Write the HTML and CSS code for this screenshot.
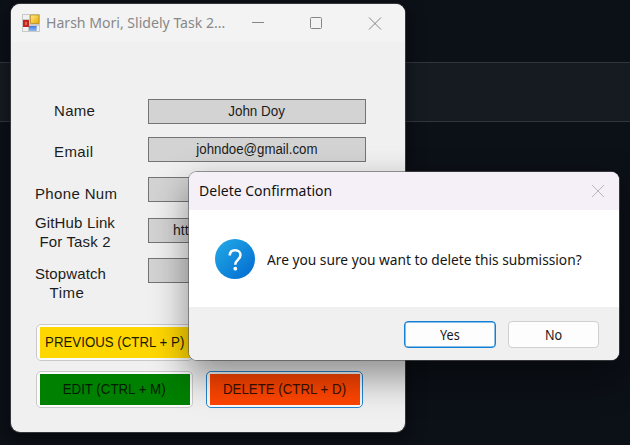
FILE: index.html
```html
<!DOCTYPE html>
<html lang="en">
<head>
<meta charset="utf-8">
<title>Slidely Task 2</title>
<link rel="stylesheet" href="styles.css">
</head>
<body>
<main class="desktop">
  <div class="band"></div>
  <section class="window form-window">
    <header class="form-title">
      <svg class="app-icon" width="18" height="18" viewBox="0 0 18 18">
        <defs>
          <linearGradient id="gold" x1="0" y1="0" x2="1" y2="1"><stop offset="0" stop-color="#ffec8b"/><stop offset="1" stop-color="#e9a800"/></linearGradient>
          <linearGradient id="sky" x1="0" y1="0" x2="0" y2="1"><stop offset="0" stop-color="#3f7be0"/><stop offset="1" stop-color="#8dbcf8"/></linearGradient>
        </defs>
        <path d="M0 0h18v18H0z" fill="#c9c9c9"/>
        <path d="M1 1h6v4H1zM1 13h5v4H1zM15 12h2v5h-2z" fill="#f1f1f1"/>
        <path d="M8.500 1h8.500v8.500H8.500z" fill="url(#gold)" stroke="#b98a18" stroke-width=".7"/>
        <path d="M1 6h6v7H1z" fill="#c3261b"/>
        <path d="M3.500 8h1v3h-1z" fill="#f3a29a"/>
        <path d="M7 12h7.500v5H7z" fill="url(#sky)"/>
      </svg>
      <h1><span>Harsh Mori, Slidely Task 2...</span></h1>
      <svg class="controls" width="132" height="14" viewBox="0 0 132 14" fill="none" stroke="#858585">
        <path d="M0 6.500h12"/><rect x="58.500" y="1.500" width="11" height="11" rx="1"/><path d="M117 1.500l12 12M129 1.500l-12 12"/>
      </svg>
    </header>
    <div class="form-body">
      <div class="row r1"><label><span class="name">Name</span></label><div class="field"><span class="john">John Doy</span></div></div>
      <div class="row r2"><label><span class="email">Email</span></label><div class="field"><span class="mail">johndoe@gmail.com</span></div></div>
      <div class="row r3"><label><span class="phone">Phone Num</span></label><div class="field"></div></div>
      <div class="row r4"><label><span class="github">GitHub Link<br>For Task 2</span></label><div class="field link"><span>https:</span></div></div>
      <div class="row r5"><label><span class="stopwatch">Stopwatch<br><span class="time">Time</span></span></label><div class="field"></div></div>
      <div class="actions">
        <button class="action previous"><span><b>PREVIOUS (CTRL + P)</b></span></button>
        <button class="action next"></button>
        <button class="action edit"><span><b>EDIT (CTRL + M)</b></span></button>
        <button class="action delete"><span><b>DELETE (CTRL + D)</b></span></button>
      </div>
    </div>
  </section>
  <section class="window dialog">
    <header class="dialog-title">
      <h2>Delete Confirmation</h2>
      <svg width="14" height="14" viewBox="0 0 14 14" fill="none" stroke="#b9b5bc"><path d="M1 1l12 12M13 1L1 13"/></svg>
    </header>
    <div class="message">
      <svg width="40" height="40" viewBox="0 0 40 40">
        <defs><linearGradient id="blue" x1=".1" y1=".1" x2=".9" y2=".9"><stop offset="0" stop-color="#20a5e5"/><stop offset="1" stop-color="#0570d2"/></linearGradient></defs>
        <circle cx="20" cy="20" r="20" fill="url(#blue)"/>
        <path d="M14.800 16.500c0-3.500 2.200-5.200 5.400-5.200s5.300 1.900 5.300 4.700c0 4.600-5.200 4.700-5.200 9.800" fill="none" stroke="#fff" stroke-width="2.500"/>
        <circle cx="20.300" cy="29.700" r="1.900" fill="#fff"/>
      </svg>
      <p>Are you sure you want to delete this submission?</p>
    </div>
    <footer>
      <button class="choice yes"><b>Yes</b></button>
      <button class="choice"><b>No</b></button>
    </footer>
  </section>
</main>
</body>
</html>
```
FILE: styles.css
```css
* { box-sizing: border-box; }
body { margin: 0; }
h1, h2, p { margin: 0; font-weight: 400; white-space: nowrap; }
button { margin: 0; padding: 0; font: inherit; }
.desktop { position: relative; width: 630px; height: 445px; overflow: hidden; padding-top: 62px; background: #0c1017; }
.band { height: 60px; background: #161b22; border: solid #30363d; border-width: 1px 0; }
.window { position: absolute; overflow: hidden; }
.form-window { left: 11px; top: 4px; width: 394px; height: 428px; border-radius: 9px; background: #f0f0f0; box-shadow: 0 0 0 1px #34373b, 0 6px 18px #0008; }
.form-title { display: flex; align-items: center; height: 38px; padding: 0 18px 0 11px; background: #f3f3f3; }
.form-title h1 { width: 207px; margin-left: 6px; font: 15px "Noto Sans", sans-serif; color: #888; }
.form-title h1 span { display: inline-block; transform: translateY(-1px) scaleX(.938); transform-origin: 0 50%; }
.controls { flex: none; margin-left: -1px; }
.form-body { padding-top: 57px; font: 15px/19px "Liberation Sans", sans-serif; color: #1c1c1c; }
.row { display: grid; grid-template-columns: 137px 218px; align-items: start; height: 38px; }
.row label { display: flex; padding-left: 24px; white-space: nowrap; text-align: center; }
.r1 label, .r2 label { padding-left: 43px; }
.r1 label { padding-top: 2px; }
.r2 { height: 40px; }
.r2 label { padding-top: 5px; }
.r3 { height: 41px; }
.r3 label { padding-top: 7px; }
.r4 { height: 40px; }
.r4 label { margin-top: -5px; }
.r5 { height: 66px; }
.r5 label { padding-top: 6px; }
.name { letter-spacing: .3px; }
.email { letter-spacing: .4px; }
.phone { letter-spacing: .35px; }
.github { letter-spacing: .15px; }
.stopwatch { letter-spacing: .1px; }
.time { padding-right: 7px; letter-spacing: .5px; }
.field { display: flex; justify-content: center; height: 25px; border: 1px solid #747474; background: #d3d3d3; font-size: 14px; line-height: 22px; }
.john { transform: scaleX(.96); }
.mail { transform: scaleX(.948); }
.link { justify-content: flex-start; padding-left: 24px; }
.actions { display: grid; grid-template-columns: 157px 157px; gap: 10px 13px; padding: 0 25px; }
.action { height: 37px; padding: 2px; border: 1px solid #c9c9c9; border-radius: 5px; background-color: #fcfcfc; font-size: 15px; color: #1b1b00; white-space: nowrap; }
.action span { display: flex; justify-content: center; width: 150px; height: 31px; margin: 0 auto; line-height: 30px; }
.action b { flex: none; font-weight: 400; transform: scaleX(.885); }
.previous span { background: #ffd700; }
.edit span { background: #008000; color: #001c00; }
.delete { border-color: #2784ce; }
.delete span { background: #ff4500; color: #3a1000; }
.dialog { left: 189px; top: 172px; width: 430px; height: 188px; border-radius: 8px; background: #fff; box-shadow: 0 0 0 1px #5559, 0 16px 36px 2px #0006; }
.dialog-title { display: flex; align-items: center; justify-content: space-between; height: 38px; padding: 0 14px 0 10px; background: #f5f0f8; }
.dialog h2 { font: 15px "Noto Sans", sans-serif; color: #111; transform: translateY(-1px) scaleX(.934); transform-origin: 0 50%; }
.message { display: flex; align-items: center; height: 97px; padding: 0 0 0 26px; }
.message p { margin-left: 12px; padding-top: 2px; font: 14px "Noto Sans", sans-serif; color: #161616; transform: scaleX(.981); transform-origin: 0 50%; }
.dialog footer { display: flex; justify-content: flex-end; gap: 12px; height: 53px; padding: 14px 20px 0; background: #f0f0f0; }
.choice { width: 91.500px; height: 27px; border: 1px solid #d0d0d0; border-radius: 4px; background: #fdfdfd; font: 14px "Noto Sans", sans-serif; color: #161616; }
.choice b { display: inline-block; font-weight: 400; transform: scaleX(.9); }
.yes { border: 1px solid #1280d5; box-shadow: inset 0 0 0 .5px #1280d5; }
```
